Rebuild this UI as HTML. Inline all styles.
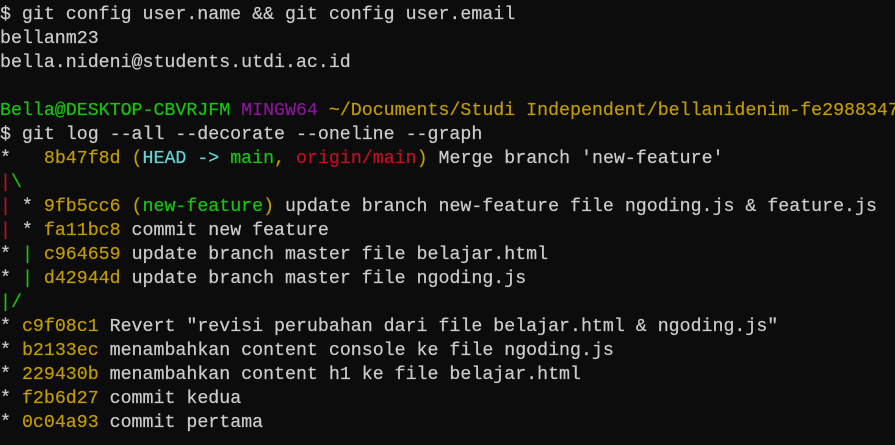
<html><head><style>
body{margin:0;background:#0c0c0c;width:895px;height:445px;overflow:hidden}
pre{margin:0;padding:3px 0 0 0;font-family:"Liberation Mono",monospace;font-size:18.28px;line-height:24px;color:#cccccc;white-space:pre;-webkit-text-stroke:0.2px currentColor}
.y{color:#c19c00}.g{color:#13a10e}.p{color:#881798}.c{color:#61d6d6}.G{color:#16c60c}.R{color:#e74856}.r{color:#c50f1f}
</style></head><body><pre>$ git config user.name &amp;&amp; git config user.email
bellanm23
bella.nideni@students.utdi.ac.id

<span class="g">Bella@DESKTOP-CBVRJFM</span> <span class="p">MINGW64</span> <span class="y">~/Documents/Studi Independent/bellanidenim-fe2988347</span>
$ git log --all --decorate --oneline --graph
*   <span class="y">8b47f8d (</span><span class="c">HEAD -&gt; </span><span class="G">main</span><span class="y">, </span><span class="R">origin/main</span><span class="y">)</span> Merge branch 'new-feature'
<span class="r">|</span><span class="g">\</span>
<span class="r">|</span> * <span class="y">9fb5cc6 (</span><span class="G">new-feature</span><span class="y">)</span> update branch new-feature file ngoding.js &amp; feature.js
<span class="r">|</span> * <span class="y">fa11bc8</span> commit new feature
* <span class="g">|</span> <span class="y">c964659</span> update branch master file belajar.html
* <span class="g">|</span> <span class="y">d42944d</span> update branch master file ngoding.js
<span class="g">|/</span>
* <span class="y">c9f08c1</span> Revert "revisi perubahan dari file belajar.html &amp; ngoding.js"
* <span class="y">b2133ec</span> menambahkan content console ke file ngoding.js
* <span class="y">229430b</span> menambahkan content h1 ke file belajar.html
* <span class="y">f2b6d27</span> commit kedua
* <span class="y">0c04a93</span> commit pertama
</pre></body></html>
